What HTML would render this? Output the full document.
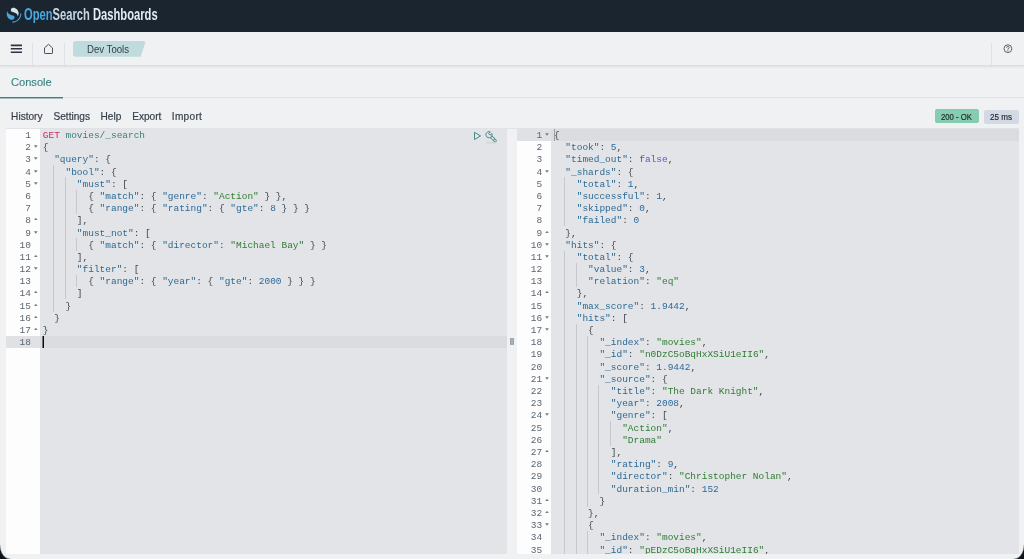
<!DOCTYPE html>
<html>
<head>
<meta charset="utf-8">
<title>Dev Tools - OpenSearch Dashboards</title>
<style>
*{box-sizing:border-box;margin:0;padding:0}
html,body{width:1024px;height:559px;overflow:hidden;background:#f0f1f3;font-family:"Liberation Sans",sans-serif;color:#2a3037}
body{position:relative;opacity:.9999}
.abs{position:absolute}
#hdr{left:0;top:0;width:1024px;height:32.7px;background:#1b2530}
#brand{left:23.8px;top:2.8px;height:24px;line-height:24px;font-size:16px;font-weight:bold;color:#e4ebf2;white-space:nowrap;transform-origin:0 50%;transform:scaleX(.699)}
#brand .o{color:#4aa8e0}
#brand .s{color:#c5d6e6}
#bar2{left:0;top:32px;width:1024px;height:34px;background:#f0f1f3;border-bottom:1px solid #dcdee3;box-shadow:0 1px 2px rgba(0,0,0,.08)}
.vsep{width:1px;background:#dfe1e6;top:43px;height:22px}
#crumb{left:73px;top:40.6px;width:73px;height:16.2px;background:#bfdbdc;border-radius:3px;clip-path:polygon(0 0,100% 0,calc(100% - 5.4px) 100%,0 100%)}
#crumbt{left:87.1px;top:42.6px;font-size:10.6px;line-height:13px;color:#343c47;white-space:nowrap;transform-origin:0 50%;transform:scaleX(.907)}
#tabs{left:0;top:67px;width:1024px;height:31px;border-bottom:1px solid #dfe1e5}
#tabtxt{left:10.8px;top:74.3px;font-size:11.6px;line-height:16px;color:#3a8582;-webkit-text-stroke:.15px #3a8582;white-space:nowrap;transform-origin:0 50%;transform:scaleX(.957)}
#tabul{left:0;top:97px;width:63px;height:1px;background:#3a8582;box-shadow:0 1px 0 rgba(58,133,130,.45)}
.menu{top:109.5px;font-size:10.1px;line-height:14px;color:#363f4b;white-space:nowrap;-webkit-text-stroke:.2px #363f4b}
.badge{border-radius:2px}
.bt{font-size:8.6px;line-height:12px;color:#1d2329;-webkit-text-stroke:.15px #1d2329;white-space:nowrap;transform-origin:0 50%;top:110.8px}
.ed{top:128.6px;height:425.2px;overflow:hidden;font-family:"Liberation Mono",monospace;font-size:9.4833px;line-height:12.196px}
.gut{left:0;top:0;bottom:0;background:#fdfdfe;color:#5c6670}
.code{top:0;bottom:0;background:#e3e4e7}
.gl{position:absolute;left:0;right:0;height:12px;line-height:12px}
.gl .ln{position:absolute;right:9.2px;top:0}
.act{background:#dbdce0}
.gut .act{background:#e0e1e5}
.tx{position:absolute;left:0;right:0;top:-.6px;height:430px}
.cl{position:absolute;left:0;right:0;height:12px;line-height:12px;white-space:pre;padding-left:2.7px;color:#40474f}
.ig{position:absolute;width:1px;height:12.196px;background:#c6c8ce;margin-left:2.7px}
.fd,.fu{position:absolute;right:2.4px;top:3.3px;width:3.8px;height:2.5px;background:#737a83}
.fd{clip-path:polygon(0 0,100% 0,50% 100%)}
.fu{clip-path:polygon(0 100%,100% 100%,50% 0);top:2.8px}
.m{color:#c4296b}
.u{color:#3a7f78}
.k{color:#2b6a94}
.s{color:#2e7d32}
.n{color:#2b6a9b}
.b{color:#5456d6}
.p{color:#40474f}
</style>
</head>
<body>
<div id="hdr" class="abs"></div>
<svg class="abs" style="left:6px;top:7px" width="18" height="18" viewBox="0 0 18 18"><g transform="translate(.75,.75) scale(.2281 .2312)">
  <path fill="#4aa5de" d="M61.7 23.5c-1.3 0-2.3 1-2.3 2.3 0 18.500-15 33.500-33.500 33.500-1.300 0-2.300 1-2.300 2.300s1 2.300 2.300 2.300C46.900 63.900 64 46.800 64 25.800c0-1.300-1-2.300-2.300-2.300z"/>
  <path fill="#d3e3f0" d="M48.100 38c2.200-3.600 4.300-8.300 3.900-15C51.100 9.200 38.600-1.300 26.800.1c-4.600.5-9.400 4.300-8.900 11 .2 2.900 1.600 4.600 3.900 5.900 2.200 1.300 5 2 8.200 2.900 3.800 1.100 8.300 2.300 11.700 4.800 4.100 3 6.900 6.500 6.400 13.300z"/>
  <path fill="#4aa5de" d="M3.900 14c-2.200 3.600-4.300 8.300-3.900 15C.9 42.800 13.400 53.300 25.200 51.900c4.600-.5 9.400-4.300 8.900-11-.2-2.900-1.600-4.600-3.900-5.900-2.200-1.300-5-2-8.200-2.900-3.800-1.100-8.300-2.300-11.700-4.800C6.200 24.300 3.400 20.800 3.900 14z"/>
</g></svg>
<div id="brand" class="abs"><span class="o">Open</span><span class="s">Search</span> Dashboards</div>

<div id="bar2" class="abs"></div>
<!-- hamburger -->
<svg class="abs" style="left:10px;top:43px" width="14" height="12" viewBox="0 0 14 12"><path d="M.8 2.400 H12 M.8 5.750 H12 M.8 9.200 H12" stroke="#2c3440" stroke-width="1.650" stroke-linecap="butt" fill="none"/></svg>
<div class="abs vsep" style="left:32.200px"></div>
<svg class="abs" style="left:43px;top:43px" width="12" height="12" viewBox="0 0 12 12"><path d="M1.500 4.900 L5.500 1.300 L9.500 4.900 V9.900 Q9.500 10.500 8.900 10.500 H2.100 Q1.500 10.500 1.500 9.900 Z" fill="none" stroke="#47505b" stroke-width="1" stroke-linejoin="miter"/></svg>
<div class="abs vsep" style="left:64.200px"></div>
<div id="crumb" class="abs"></div><div id="crumbt" class="abs">Dev Tools</div>
<div class="abs vsep" style="left:991.400px"></div>
<svg class="abs" style="left:1002px;top:43px" width="12" height="12" viewBox="0 0 12 12"><g transform="translate(.9,.7)"><circle cx="5" cy="5" r="3.900" fill="none" stroke="#4c5562" stroke-width=".9"/><path d="M3.700 4.100 Q3.700 2.700 5 2.700 Q6.300 2.700 6.300 3.900 Q6.300 4.700 5 5.200 V6" fill="none" stroke="#4c5562" stroke-width=".8"/><circle cx="5" cy="7.200" r=".55" fill="#4c5562"/></g></svg>

<div id="tabs" class="abs"></div>
<div id="tabtxt" class="abs">Console</div>
<div id="tabul" class="abs"></div>

<div class="abs menu" style="left:11.100px">History</div>
<div class="abs menu" style="left:53.500px">Settings</div>
<div class="abs menu" style="left:100.500px">Help</div>
<div class="abs menu" style="left:132.200px">Export</div>
<div class="abs menu" style="left:171.800px;letter-spacing:.3px">Import</div>

<div class="abs badge" style="left:934.900px;top:109.100px;width:43.800px;height:14px;background:#85ccb0"></div><div class="abs bt" style="left:941px;transform:scaleX(.9)">200 - OK</div>
<div class="abs badge" style="left:984px;top:110px;width:35px;height:14px;background:#d4d9e6"></div><div class="abs bt" style="left:990px;top:111px;transform:scaleX(.94)">25 ms</div>

<div class="abs" style="left:6px;top:128px;width:1013px;height:1px;background:#e1e2e5"></div>
<!-- left editor -->
<div class="abs ed" style="left:5.900px;width:501px">
  <div class="abs gut" style="width:34.200px">
<div class="abs act" style="left:0;right:0;top:207.33px;height:12.196px"></div>
<div class="tx"><div class="gl" style="top:2px"><span class="ln">1</span></div>
<div class="gl" style="top:14px"><span class="ln">2</span><i class="fd"></i></div>
<div class="gl" style="top:26px"><span class="ln">3</span><i class="fd"></i></div>
<div class="gl" style="top:39px"><span class="ln">4</span><i class="fd"></i></div>
<div class="gl" style="top:51px"><span class="ln">5</span><i class="fd"></i></div>
<div class="gl" style="top:63px"><span class="ln">6</span></div>
<div class="gl" style="top:75px"><span class="ln">7</span></div>
<div class="gl" style="top:87px"><span class="ln">8</span><i class="fu"></i></div>
<div class="gl" style="top:100px"><span class="ln">9</span><i class="fd"></i></div>
<div class="gl" style="top:112px"><span class="ln">10</span></div>
<div class="gl" style="top:124px"><span class="ln">11</span><i class="fu"></i></div>
<div class="gl" style="top:136px"><span class="ln">12</span><i class="fd"></i></div>
<div class="gl" style="top:148px"><span class="ln">13</span></div>
<div class="gl" style="top:160px"><span class="ln">14</span><i class="fu"></i></div>
<div class="gl" style="top:173px"><span class="ln">15</span><i class="fu"></i></div>
<div class="gl" style="top:185px"><span class="ln">16</span><i class="fu"></i></div>
<div class="gl" style="top:197px"><span class="ln">17</span><i class="fu"></i></div>
<div class="gl" style="top:209px"><span class="ln">18</span></div></div>
  </div>
  <div class="abs code" style="left:34.200px;right:0">

<div class="abs act" style="left:0;right:0;top:207.33px;height:12.196px"></div>
<div class="ig" style="left:10.38px;top:36.59px"></div>
<div class="ig" style="left:10.38px;top:48.78px"></div>
<div class="ig" style="left:21.76px;top:48.78px"></div>
<div class="ig" style="left:10.38px;top:60.98px"></div>
<div class="ig" style="left:21.76px;top:60.98px"></div>
<div class="ig" style="left:33.14px;top:60.98px"></div>
<div class="ig" style="left:10.38px;top:73.18px"></div>
<div class="ig" style="left:21.76px;top:73.18px"></div>
<div class="ig" style="left:33.14px;top:73.18px"></div>
<div class="ig" style="left:10.38px;top:85.37px"></div>
<div class="ig" style="left:21.76px;top:85.37px"></div>
<div class="ig" style="left:10.38px;top:97.57px"></div>
<div class="ig" style="left:21.76px;top:97.57px"></div>
<div class="ig" style="left:10.38px;top:109.76px"></div>
<div class="ig" style="left:21.76px;top:109.76px"></div>
<div class="ig" style="left:33.14px;top:109.76px"></div>
<div class="ig" style="left:10.38px;top:121.96px"></div>
<div class="ig" style="left:21.76px;top:121.96px"></div>
<div class="ig" style="left:10.38px;top:134.16px"></div>
<div class="ig" style="left:21.76px;top:134.16px"></div>
<div class="ig" style="left:10.38px;top:146.35px"></div>
<div class="ig" style="left:21.76px;top:146.35px"></div>
<div class="ig" style="left:33.14px;top:146.35px"></div>
<div class="ig" style="left:10.38px;top:158.55px"></div>
<div class="ig" style="left:21.76px;top:158.55px"></div>
<div class="ig" style="left:10.38px;top:170.74px"></div>
<div class="tx"><div class="cl" style="top:2px"><span class="m">GET</span> <span class="u">movies/_search</span></div>
<div class="cl" style="top:14px"><span class="p">{</span></div>
<div class="cl" style="top:26px">  <span class="k">&quot;query&quot;</span><span class="p">:</span> <span class="p">{</span></div>
<div class="cl" style="top:39px">    <span class="k">&quot;bool&quot;</span><span class="p">:</span> <span class="p">{</span></div>
<div class="cl" style="top:51px">      <span class="k">&quot;must&quot;</span><span class="p">:</span> <span class="p">[</span></div>
<div class="cl" style="top:63px">        <span class="p">{</span> <span class="k">&quot;match&quot;</span><span class="p">:</span> <span class="p">{</span> <span class="k">&quot;genre&quot;</span><span class="p">:</span> <span class="s">&quot;Action&quot;</span> <span class="p">}</span> <span class="p">}</span><span class="p">,</span></div>
<div class="cl" style="top:75px">        <span class="p">{</span> <span class="k">&quot;range&quot;</span><span class="p">:</span> <span class="p">{</span> <span class="k">&quot;rating&quot;</span><span class="p">:</span> <span class="p">{</span> <span class="k">&quot;gte&quot;</span><span class="p">:</span> <span class="n">8</span> <span class="p">}</span> <span class="p">}</span> <span class="p">}</span></div>
<div class="cl" style="top:87px">      <span class="p">]</span><span class="p">,</span></div>
<div class="cl" style="top:100px">      <span class="k">&quot;must_not&quot;</span><span class="p">:</span> <span class="p">[</span></div>
<div class="cl" style="top:112px">        <span class="p">{</span> <span class="k">&quot;match&quot;</span><span class="p">:</span> <span class="p">{</span> <span class="k">&quot;director&quot;</span><span class="p">:</span> <span class="s">&quot;Michael Bay&quot;</span> <span class="p">}</span> <span class="p">}</span></div>
<div class="cl" style="top:124px">      <span class="p">]</span><span class="p">,</span></div>
<div class="cl" style="top:136px">      <span class="k">&quot;filter&quot;</span><span class="p">:</span> <span class="p">[</span></div>
<div class="cl" style="top:148px">        <span class="p">{</span> <span class="k">&quot;range&quot;</span><span class="p">:</span> <span class="p">{</span> <span class="k">&quot;year&quot;</span><span class="p">:</span> <span class="p">{</span> <span class="k">&quot;gte&quot;</span><span class="p">:</span> <span class="n">2000</span> <span class="p">}</span> <span class="p">}</span> <span class="p">}</span></div>
<div class="cl" style="top:160px">      <span class="p">]</span></div>
<div class="cl" style="top:173px">    <span class="p">}</span></div>
<div class="cl" style="top:185px">  <span class="p">}</span></div>
<div class="cl" style="top:197px"><span class="p">}</span></div>
<div class="cl" style="top:209px"></div></div>
    <div class="abs" style="left:2.900px;top:207.400px;width:1px;height:12px;background:#0a0a0a;box-shadow:-1px 0 0 rgba(10,10,10,.5)"></div>
  </div>
</div>
<!-- run / wrench icons -->
<svg class="abs" style="left:473px;top:131px" width="10" height="11" viewBox="0 0 10 11"><path transform="translate(.5,.3)" d="M1 1.100 L7.100 4.650 L1 8.200 Z" fill="none" stroke="#3f8d85" stroke-width="1" stroke-linejoin="round"/></svg>
<svg class="abs" style="left:485px;top:130px" width="13" height="14" viewBox="0 -.5 13 14">
  <path d="M6.200 6.400 L10.100 10.100" stroke="#4a948c" stroke-width="3.300" stroke-linecap="round" fill="none"/>
  <path d="M7 7.200 L8.400 8.500" stroke="#e3e8e8" stroke-width="1.500" stroke-linecap="round" fill="none"/>
  <circle cx="10.100" cy="10.100" r=".85" fill="#e3e8e8"/>
  <circle cx="4" cy="4.200" r="3.100" fill="#e3e4e8"/>
  <path d="M6.830 2.930 A3.100 3.100 0 1 1 5.270 1.370 L3.600 3.100 L5.100 4.650 Z" fill="none" stroke="#3f8d85" stroke-width="1" stroke-linejoin="round"/>
  <path d="M1.200 12.300 H11.500" stroke="#c9d1d1" stroke-width="1"/>
</svg>

<!-- resizer -->
<div class="abs" style="left:510.100px;top:337.600px;width:3.800px;height:7.700px;background:#a9adb7;border-left:1px solid #9ea2ad;border-right:1px solid #9ea2ad"></div>

<!-- right editor -->
<div class="abs ed" style="left:517.100px;width:501.600px">
  <div class="abs gut" style="width:34.200px">
<div class="abs act" style="left:0;right:0;top:0.00px;height:12.196px"></div>
<div class="tx"><div class="gl" style="top:2px"><span class="ln">1</span><i class="fd"></i></div>
<div class="gl" style="top:14px"><span class="ln">2</span></div>
<div class="gl" style="top:26px"><span class="ln">3</span></div>
<div class="gl" style="top:39px"><span class="ln">4</span><i class="fd"></i></div>
<div class="gl" style="top:51px"><span class="ln">5</span></div>
<div class="gl" style="top:63px"><span class="ln">6</span></div>
<div class="gl" style="top:75px"><span class="ln">7</span></div>
<div class="gl" style="top:87px"><span class="ln">8</span></div>
<div class="gl" style="top:100px"><span class="ln">9</span><i class="fu"></i></div>
<div class="gl" style="top:112px"><span class="ln">10</span><i class="fd"></i></div>
<div class="gl" style="top:124px"><span class="ln">11</span><i class="fd"></i></div>
<div class="gl" style="top:136px"><span class="ln">12</span></div>
<div class="gl" style="top:148px"><span class="ln">13</span></div>
<div class="gl" style="top:160px"><span class="ln">14</span><i class="fu"></i></div>
<div class="gl" style="top:173px"><span class="ln">15</span></div>
<div class="gl" style="top:185px"><span class="ln">16</span><i class="fd"></i></div>
<div class="gl" style="top:197px"><span class="ln">17</span><i class="fd"></i></div>
<div class="gl" style="top:209px"><span class="ln">18</span></div>
<div class="gl" style="top:221px"><span class="ln">19</span></div>
<div class="gl" style="top:234px"><span class="ln">20</span></div>
<div class="gl" style="top:246px"><span class="ln">21</span><i class="fd"></i></div>
<div class="gl" style="top:258px"><span class="ln">22</span></div>
<div class="gl" style="top:270px"><span class="ln">23</span></div>
<div class="gl" style="top:282px"><span class="ln">24</span><i class="fd"></i></div>
<div class="gl" style="top:295px"><span class="ln">25</span></div>
<div class="gl" style="top:307px"><span class="ln">26</span></div>
<div class="gl" style="top:319px"><span class="ln">27</span><i class="fu"></i></div>
<div class="gl" style="top:331px"><span class="ln">28</span></div>
<div class="gl" style="top:343px"><span class="ln">29</span></div>
<div class="gl" style="top:356px"><span class="ln">30</span></div>
<div class="gl" style="top:368px"><span class="ln">31</span><i class="fu"></i></div>
<div class="gl" style="top:380px"><span class="ln">32</span><i class="fu"></i></div>
<div class="gl" style="top:392px"><span class="ln">33</span><i class="fd"></i></div>
<div class="gl" style="top:404px"><span class="ln">34</span></div>
<div class="gl" style="top:417px"><span class="ln">35</span></div></div>
  </div>
  <div class="abs code" style="left:34.200px;right:0">

<div class="abs act" style="left:0;right:0;top:0.00px;height:12.196px"></div>
<div class="ig" style="left:10.38px;top:48.78px"></div>
<div class="ig" style="left:10.38px;top:60.98px"></div>
<div class="ig" style="left:10.38px;top:73.18px"></div>
<div class="ig" style="left:10.38px;top:85.37px"></div>
<div class="ig" style="left:10.38px;top:121.96px"></div>
<div class="ig" style="left:10.38px;top:134.16px"></div>
<div class="ig" style="left:21.76px;top:134.16px"></div>
<div class="ig" style="left:10.38px;top:146.35px"></div>
<div class="ig" style="left:21.76px;top:146.35px"></div>
<div class="ig" style="left:10.38px;top:158.55px"></div>
<div class="ig" style="left:10.38px;top:170.74px"></div>
<div class="ig" style="left:10.38px;top:182.94px"></div>
<div class="ig" style="left:10.38px;top:195.14px"></div>
<div class="ig" style="left:21.76px;top:195.14px"></div>
<div class="ig" style="left:10.38px;top:207.33px"></div>
<div class="ig" style="left:21.76px;top:207.33px"></div>
<div class="ig" style="left:33.14px;top:207.33px"></div>
<div class="ig" style="left:10.38px;top:219.53px"></div>
<div class="ig" style="left:21.76px;top:219.53px"></div>
<div class="ig" style="left:33.14px;top:219.53px"></div>
<div class="ig" style="left:10.38px;top:231.72px"></div>
<div class="ig" style="left:21.76px;top:231.72px"></div>
<div class="ig" style="left:33.14px;top:231.72px"></div>
<div class="ig" style="left:10.38px;top:243.92px"></div>
<div class="ig" style="left:21.76px;top:243.92px"></div>
<div class="ig" style="left:33.14px;top:243.92px"></div>
<div class="ig" style="left:10.38px;top:256.12px"></div>
<div class="ig" style="left:21.76px;top:256.12px"></div>
<div class="ig" style="left:33.14px;top:256.12px"></div>
<div class="ig" style="left:44.52px;top:256.12px"></div>
<div class="ig" style="left:10.38px;top:268.31px"></div>
<div class="ig" style="left:21.76px;top:268.31px"></div>
<div class="ig" style="left:33.14px;top:268.31px"></div>
<div class="ig" style="left:44.52px;top:268.31px"></div>
<div class="ig" style="left:10.38px;top:280.51px"></div>
<div class="ig" style="left:21.76px;top:280.51px"></div>
<div class="ig" style="left:33.14px;top:280.51px"></div>
<div class="ig" style="left:44.52px;top:280.51px"></div>
<div class="ig" style="left:10.38px;top:292.70px"></div>
<div class="ig" style="left:21.76px;top:292.70px"></div>
<div class="ig" style="left:33.14px;top:292.70px"></div>
<div class="ig" style="left:44.52px;top:292.70px"></div>
<div class="ig" style="left:55.90px;top:292.70px"></div>
<div class="ig" style="left:10.38px;top:304.90px"></div>
<div class="ig" style="left:21.76px;top:304.90px"></div>
<div class="ig" style="left:33.14px;top:304.90px"></div>
<div class="ig" style="left:44.52px;top:304.90px"></div>
<div class="ig" style="left:55.90px;top:304.90px"></div>
<div class="ig" style="left:10.38px;top:317.10px"></div>
<div class="ig" style="left:21.76px;top:317.10px"></div>
<div class="ig" style="left:33.14px;top:317.10px"></div>
<div class="ig" style="left:44.52px;top:317.10px"></div>
<div class="ig" style="left:10.38px;top:329.29px"></div>
<div class="ig" style="left:21.76px;top:329.29px"></div>
<div class="ig" style="left:33.14px;top:329.29px"></div>
<div class="ig" style="left:44.52px;top:329.29px"></div>
<div class="ig" style="left:10.38px;top:341.49px"></div>
<div class="ig" style="left:21.76px;top:341.49px"></div>
<div class="ig" style="left:33.14px;top:341.49px"></div>
<div class="ig" style="left:44.52px;top:341.49px"></div>
<div class="ig" style="left:10.38px;top:353.68px"></div>
<div class="ig" style="left:21.76px;top:353.68px"></div>
<div class="ig" style="left:33.14px;top:353.68px"></div>
<div class="ig" style="left:44.52px;top:353.68px"></div>
<div class="ig" style="left:10.38px;top:365.88px"></div>
<div class="ig" style="left:21.76px;top:365.88px"></div>
<div class="ig" style="left:33.14px;top:365.88px"></div>
<div class="ig" style="left:10.38px;top:378.08px"></div>
<div class="ig" style="left:21.76px;top:378.08px"></div>
<div class="ig" style="left:10.38px;top:390.27px"></div>
<div class="ig" style="left:21.76px;top:390.27px"></div>
<div class="ig" style="left:10.38px;top:402.47px"></div>
<div class="ig" style="left:21.76px;top:402.47px"></div>
<div class="ig" style="left:33.14px;top:402.47px"></div>
<div class="ig" style="left:10.38px;top:414.66px"></div>
<div class="ig" style="left:21.76px;top:414.66px"></div>
<div class="ig" style="left:33.14px;top:414.66px"></div>
<div class="tx"><div class="cl" style="top:2px"><span class="p">{</span></div>
<div class="cl" style="top:14px">  <span class="k">&quot;took&quot;</span><span class="p">:</span> <span class="n">5</span><span class="p">,</span></div>
<div class="cl" style="top:26px">  <span class="k">&quot;timed_out&quot;</span><span class="p">:</span> <span class="b">false</span><span class="p">,</span></div>
<div class="cl" style="top:39px">  <span class="k">&quot;_shards&quot;</span><span class="p">:</span> <span class="p">{</span></div>
<div class="cl" style="top:51px">    <span class="k">&quot;total&quot;</span><span class="p">:</span> <span class="n">1</span><span class="p">,</span></div>
<div class="cl" style="top:63px">    <span class="k">&quot;successful&quot;</span><span class="p">:</span> <span class="n">1</span><span class="p">,</span></div>
<div class="cl" style="top:75px">    <span class="k">&quot;skipped&quot;</span><span class="p">:</span> <span class="n">0</span><span class="p">,</span></div>
<div class="cl" style="top:87px">    <span class="k">&quot;failed&quot;</span><span class="p">:</span> <span class="n">0</span></div>
<div class="cl" style="top:100px">  <span class="p">}</span><span class="p">,</span></div>
<div class="cl" style="top:112px">  <span class="k">&quot;hits&quot;</span><span class="p">:</span> <span class="p">{</span></div>
<div class="cl" style="top:124px">    <span class="k">&quot;total&quot;</span><span class="p">:</span> <span class="p">{</span></div>
<div class="cl" style="top:136px">      <span class="k">&quot;value&quot;</span><span class="p">:</span> <span class="n">3</span><span class="p">,</span></div>
<div class="cl" style="top:148px">      <span class="k">&quot;relation&quot;</span><span class="p">:</span> <span class="s">&quot;eq&quot;</span></div>
<div class="cl" style="top:160px">    <span class="p">}</span><span class="p">,</span></div>
<div class="cl" style="top:173px">    <span class="k">&quot;max_score&quot;</span><span class="p">:</span> <span class="n">1.9442</span><span class="p">,</span></div>
<div class="cl" style="top:185px">    <span class="k">&quot;hits&quot;</span><span class="p">:</span> <span class="p">[</span></div>
<div class="cl" style="top:197px">      <span class="p">{</span></div>
<div class="cl" style="top:209px">        <span class="k">&quot;_index&quot;</span><span class="p">:</span> <span class="s">&quot;movies&quot;</span><span class="p">,</span></div>
<div class="cl" style="top:221px">        <span class="k">&quot;_id&quot;</span><span class="p">:</span> <span class="s">&quot;n0DzC5oBqHxXSiU1eII6&quot;</span><span class="p">,</span></div>
<div class="cl" style="top:234px">        <span class="k">&quot;_score&quot;</span><span class="p">:</span> <span class="n">1.9442</span><span class="p">,</span></div>
<div class="cl" style="top:246px">        <span class="k">&quot;_source&quot;</span><span class="p">:</span> <span class="p">{</span></div>
<div class="cl" style="top:258px">          <span class="k">&quot;title&quot;</span><span class="p">:</span> <span class="s">&quot;The Dark Knight&quot;</span><span class="p">,</span></div>
<div class="cl" style="top:270px">          <span class="k">&quot;year&quot;</span><span class="p">:</span> <span class="n">2008</span><span class="p">,</span></div>
<div class="cl" style="top:282px">          <span class="k">&quot;genre&quot;</span><span class="p">:</span> <span class="p">[</span></div>
<div class="cl" style="top:295px">            <span class="s">&quot;Action&quot;</span><span class="p">,</span></div>
<div class="cl" style="top:307px">            <span class="s">&quot;Drama&quot;</span></div>
<div class="cl" style="top:319px">          <span class="p">]</span><span class="p">,</span></div>
<div class="cl" style="top:331px">          <span class="k">&quot;rating&quot;</span><span class="p">:</span> <span class="n">9</span><span class="p">,</span></div>
<div class="cl" style="top:343px">          <span class="k">&quot;director&quot;</span><span class="p">:</span> <span class="s">&quot;Christopher Nolan&quot;</span><span class="p">,</span></div>
<div class="cl" style="top:356px">          <span class="k">&quot;duration_min&quot;</span><span class="p">:</span> <span class="n">152</span></div>
<div class="cl" style="top:368px">        <span class="p">}</span></div>
<div class="cl" style="top:380px">      <span class="p">}</span><span class="p">,</span></div>
<div class="cl" style="top:392px">      <span class="p">{</span></div>
<div class="cl" style="top:404px">        <span class="k">&quot;_index&quot;</span><span class="p">:</span> <span class="s">&quot;movies&quot;</span><span class="p">,</span></div>
<div class="cl" style="top:417px">        <span class="k">&quot;_id&quot;</span><span class="p">:</span> <span class="s">&quot;pEDzC5oBqHxXSiU1eII6&quot;</span><span class="p">,</span></div></div>
    <div class="abs" style="left:2.700px;top:0;width:1px;height:12px;background:#999da3"></div>
  </div>
</div>

<!-- window corners -->
<div class="abs" style="left:0;bottom:0;width:10px;height:14px;background:radial-gradient(ellipse 10px 14px at 100% 0,rgba(13,21,28,0) 93%,rgba(13,21,28,.5) 99%,#0d151c 106%)"></div>
<div class="abs" style="right:0;bottom:0;width:10px;height:14px;background:radial-gradient(ellipse 10px 14px at 0 0,rgba(13,21,28,0) 93%,rgba(13,21,28,.5) 99%,#0d151c 106%)"></div>
<div class="abs" style="left:0;top:0;width:1px;height:1px;-webkit-mask:linear-gradient(#000,#000);mask:linear-gradient(#000,#000)"></div>
</body>
</html>
